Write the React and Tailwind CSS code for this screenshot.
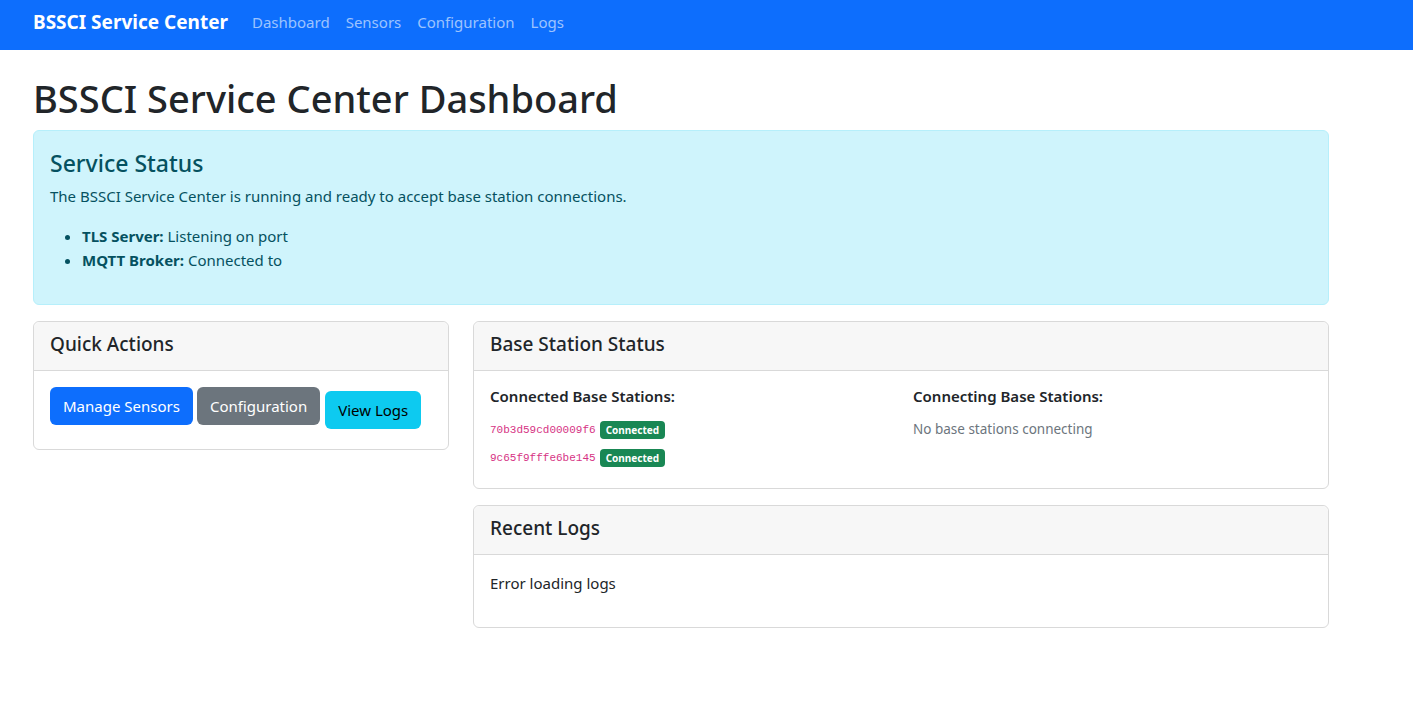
import React from "react";

const FONT = { fontFamily: '"Noto Sans", "Open Sans", Roboto, sans-serif' };

function Card({ title, children, className = "" }) {
  return (
    <div className={`border border-[#d9d9d9] rounded-md bg-white ${className}`}>
      <div className="bg-[#f7f7f7] border-b border-[#d9d9d9] rounded-t-md px-4 pt-[10px] h-[49px]">
        <h5 className="text-[19px] leading-[24px] font-medium text-[#212529]">{title}</h5>
      </div>
      {children}
    </div>
  );
}

function Station({ id }) {
  return (
    <div className="flex items-center gap-1 h-7">
      <code className="text-[11px] text-[#d63384]" style={{ fontFamily: '"Liberation Mono", monospace' }}>
        {id}
      </code>
      <span className="bg-[#198754] text-white text-[10px] font-bold leading-none px-[6px] py-[4px] rounded-[4px]">
        Connected
      </span>
    </div>
  );
}

export default function App() {
  return (
    <div className="min-h-screen bg-white text-[#212529]" style={FONT}>
      {/* Navbar */}
      <nav className="bg-[#0d6efd] h-[50px] flex items-center px-[33px] pb-[6px]">
        <span className="text-white text-[19px] font-bold mr-[24px]">BSSCI Service Center</span>
        <div className="flex gap-4 text-[15px] text-white/60">
          <span>Dashboard</span>
          <span>Sensors</span>
          <span>Configuration</span>
          <span>Logs</span>
        </div>
      </nav>

      <div className="w-[1296px] ml-[33px]">
        <h1 className="text-[38px] leading-[48px] font-medium mt-6 mb-2">BSSCI Service Center Dashboard</h1>

        {/* Alert */}
        <div className="bg-[#cff4fc] border border-[#b6effb] text-[#055160] rounded-md p-4 mb-4">
          <h4 className="text-[23px] leading-[29px] font-medium mb-[6px] pt-[2px]">Service Status</h4>
          <p className="text-[15px] leading-6 mb-4">
            The BSSCI Service Center is running and ready to accept base station connections.
          </p>
          <ul className="list-disc pl-8 text-[15px] leading-6 mb-4">
            <li>
              <strong>TLS Server:</strong> Listening on port
            </li>
            <li>
              <strong>MQTT Broker:</strong> Connected to
            </li>
          </ul>
        </div>

        <div className="flex gap-6 items-start">
          {/* Quick actions */}
          <Card title="Quick Actions" className="w-[416px]">
            <div className="p-4 h-[78px] flex items-start gap-1">
              <button className="bg-[#0d6efd] text-white text-[15px] h-[38px] px-[13px] rounded-md">
                Manage Sensors
              </button>
              <button className="bg-[#6c757d] text-white text-[15px] h-[38px] px-[13px] rounded-md">
                Configuration
              </button>
              <button className="bg-[#0dcaf0] text-black text-[15px] h-[38px] px-[13px] rounded-md mt-1 ml-[1px]">
                View Logs
              </button>
            </div>
          </Card>

          <div className="w-[856px] flex flex-col gap-4">
            <Card title="Base Station Status">
              <div className="p-4 grid grid-cols-2 gap-6 h-[117px]">
                <div>
                  <h6 className="text-[15px] leading-[19px] font-semibold mb-[10px]">Connected Base Stations:</h6>
                  <Station id="70b3d59cd00009f6" />
                  <Station id="9c65f9fffe6be145" />
                </div>
                <div>
                  <h6 className="text-[15px] leading-[19px] font-semibold mb-2">Connecting Base Stations:</h6>
                  <div className="text-[13.5px] leading-5 text-[#6c757d] mt-[13px]">No base stations connecting</div>
                </div>
              </div>
            </Card>

            <Card title="Recent Logs">
              <div className="p-4">
                <p className="text-[15px] leading-6 mb-4">Error loading logs</p>
              </div>
            </Card>
          </div>
        </div>
      </div>
    </div>
  );
}
